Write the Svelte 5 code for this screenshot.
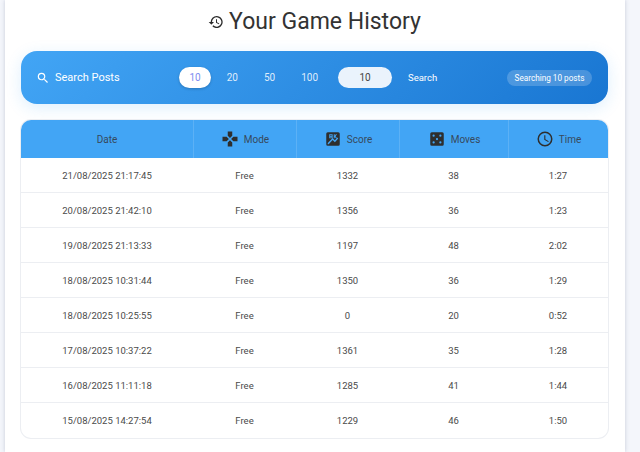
<script>
  const rows = [
    ["21/08/2025 21:17:45", "Free", 1332, 38, "1:27"],
    ["20/08/2025 21:42:10", "Free", 1356, 36, "1:23"],
    ["19/08/2025 21:13:33", "Free", 1197, 48, "2:02"],
    ["18/08/2025 10:31:44", "Free", 1350, 36, "1:29"],
    ["18/08/2025 10:25:55", "Free", 0, 20, "0:52"],
    ["17/08/2025 10:37:22", "Free", 1361, 35, "1:28"],
    ["16/08/2025 11:11:18", "Free", 1285, 41, "1:44"],
    ["15/08/2025 14:27:54", "Free", 1229, 46, "1:50"],
  ];
  const limits = [10, 20, 50, 100];
</script>

<div class="page">
  <main class="card">
    <h1>
      <svg class="history" viewBox="0 0 24 24"><path d="M13 3a9 9 0 0 0-9 9H1l3.890 3.890.07.14L9 12H6a7 7 0 1 1 2.050 4.950l-1.420 1.420A9 9 0 1 0 13 3zm-1 5v5l4.280 2.540.72-1.210-3.500-2.080V8H12z" /></svg>
      Your Game History
    </h1>

    <section class="toolbar">
      <div class="label">
        <svg class="search" viewBox="0 0 24 24"><path d="M15.500 14h-.79l-.28-.27A6.470 6.470 0 0 0 16 9.500 6.500 6.500 0 1 0 9.500 16c1.610 0 3.090-.59 4.230-1.570l.27.28v.79l5 4.990L20.490 19l-4.990-5zm-6 0C7.010 14 5 11.990 5 9.500S7.010 5 9.500 5 14 7.010 14 9.500 11.990 14 9.500 14z" /></svg>
        Search Posts
      </div>
      <div class="limits">
        {#each limits as n, i}
          <button class="limit" class:active={i === 0}>{n}</button>
        {/each}
      </div>
      <div class="custom">10</div>
      <button class="go">Search</button>
      <span class="status">Searching 10 posts</span>
    </section>

    <section class="table">
      <div class="row head">
        <div class="cell">Date</div>
        <div class="cell">
          <svg viewBox="0 0 24 24"><path d="M15 7.500V2H9v5.500l3 3 3-3zM7.500 9H2v6h5.500l3-3-3-3zM9 16.500V22h6v-5.500l-3-3-3 3zM16.500 9l-3 3 3 3H22V9h-5.500z" /></svg>
          Mode
        </div>
        <div class="cell">
          <svg viewBox="0 0 24 24"><path fill-rule="evenodd" d="M5 3h14a2 2 0 0 1 2 2v14a2 2 0 0 1-2 2H5a2 2 0 0 1-2-2V5a2 2 0 0 1 2-2zm14 8.200-1.200-1.200-3.300 3.600-3-3L5 17.200V19h1.200l5.300-5.600 3 3 4.500-5.200zM7 5.500v5.500h4.500V5.500H7zm1.300 1.200h1.900v1H8.300v-1zm0 2.200h1.900v1H8.300v-1zM13 5.500V11h1.300V9l1.500 2h1.700l-2-2.800 1.900-2.700h-1.600l-1.500 2.100V5.500H13z" /></svg>
          Score
        </div>
        <div class="cell">
          <svg viewBox="0 0 24 24"><path fill-rule="evenodd" d="M5 3h14a2 2 0 0 1 2 2v14a2 2 0 0 1-2 2H5a2 2 0 0 1-2-2V5a2 2 0 0 1 2-2zm2.500 3a1.500 1.500 0 1 0 0 3 1.500 1.500 0 0 0 0-3zm9 0a1.500 1.500 0 1 0 0 3 1.500 1.500 0 0 0 0-3zm-4.500 4.500a1.500 1.500 0 1 0 0 3 1.500 1.500 0 0 0 0-3zM7.500 15a1.500 1.500 0 1 0 0 3 1.500 1.500 0 0 0 0-3zm9 0a1.500 1.500 0 1 0 0 3 1.500 1.500 0 0 0 0-3z" /></svg>
          Moves
        </div>
        <div class="cell">
          <svg viewBox="0 0 24 24"><path d="M12 2a10 10 0 1 0 0 20 10 10 0 0 0 0-20zm0 18a8 8 0 1 1 0-16 8 8 0 0 1 0 16zm.500-13H11v6l5.250 3.150.75-1.230-4.500-2.670V7z" /></svg>
          Time
        </div>
      </div>
      {#each rows as row}
        <div class="row body">
          {#each row as value}
            <div class="cell">{value}</div>
          {/each}
        </div>
      {/each}
    </section>
  </main>
</div>

<style>
  :global(body) {
    margin: 0;
    background: #f4f6fb;
    font-family: Roboto, "Liberation Sans", sans-serif;
  }

  .page {
    height: 452px;
    overflow: hidden;
    padding-left: 5px;
    box-sizing: border-box;
  }

  .card {
    width: 620px;
    height: 452px;
    padding: 0 17px 0 16px;
    box-sizing: border-box;
    background: #fff;
    box-shadow: 0 0 4px rgba(60, 70, 110, 0.25);
  }

  h1 {
    display: flex;
    align-items: center;
    justify-content: center;
    gap: 5px;
    height: 43px;
    margin: 0 0 8px;
    color: #333;
    font-size: 23px;
    font-weight: 400;
  }

  .history {
    width: 16px;
    height: 16px;
    margin-top: 1px;
    fill: #2b2b2b;
  }

  .toolbar {
    display: flex;
    align-items: center;
    height: 53px;
    padding: 0 16px 0 15px;
    border-radius: 16px;
    background: linear-gradient(135deg, #42a5f5, #1976d2);
    box-shadow: 0 4px 16px rgba(33, 150, 243, 0.15);
    color: #fff;
    font-size: 10px;
  }

  .label {
    display: flex;
    align-items: center;
    gap: 5px;
    width: 143px;
    font-size: 11px;
  }

  .search {
    width: 14px;
    height: 14px;
    fill: #fff;
  }

  .limits {
    display: flex;
    gap: 5px;
    width: 159px;
  }

  .limit {
    height: 21px;
    padding: 0 10.500px;
    border: 0;
    border-radius: 11px;
    background: transparent;
    color: rgba(255, 255, 255, 0.85);
    font: inherit;
  }

  .limit.active {
    background: #fff;
    color: #7c8cf0;
    box-shadow: 0 1px 3px rgba(0, 0, 0, 0.2);
  }

  .custom {
    width: 54px;
    height: 21px;
    border-radius: 11px;
    background: #eaf3fc;
    color: #444;
    line-height: 21px;
    text-align: center;
  }

  .go {
    margin-left: 16px;
    padding: 0;
    border: 0;
    background: transparent;
    color: #fff;
    font: inherit;
    font-size: 9.500px;
    white-space: nowrap;
  }

  .status {
    margin-left: auto;
    padding: 0 7.500px;
    border-radius: 9px;
    background: rgba(255, 255, 255, 0.2);
    font-size: 8.200px;
    line-height: 16px;
  }

  .table {
    margin-top: 16px;
    overflow: hidden;
    border-radius: 10px;
    box-shadow: 0 0 0 1px #eceef2;
  }

  .row {
    display: grid;
    grid-template-columns: 172px 103px 103px 109px 100px;
    box-sizing: border-box;
  }

  .cell {
    display: flex;
    align-items: center;
    justify-content: center;
    gap: 5px;
  }

  .head {
    height: 38px;
    background: #42a5f5;
    color: #37495c;
    font-size: 10px;
  }

  .head .cell + .cell {
    border-left: 1px solid #5cb1f6;
  }

  .head svg {
    width: 18px;
    height: 18px;
    fill: #2e2e2e;
  }

  .body {
    height: 35px;
    color: #4a4a4a;
    font-size: 9.500px;
    border-bottom: 1px solid #eceef2;
  }

  .body:last-child {
    border-bottom: 0;
  }
</style>
